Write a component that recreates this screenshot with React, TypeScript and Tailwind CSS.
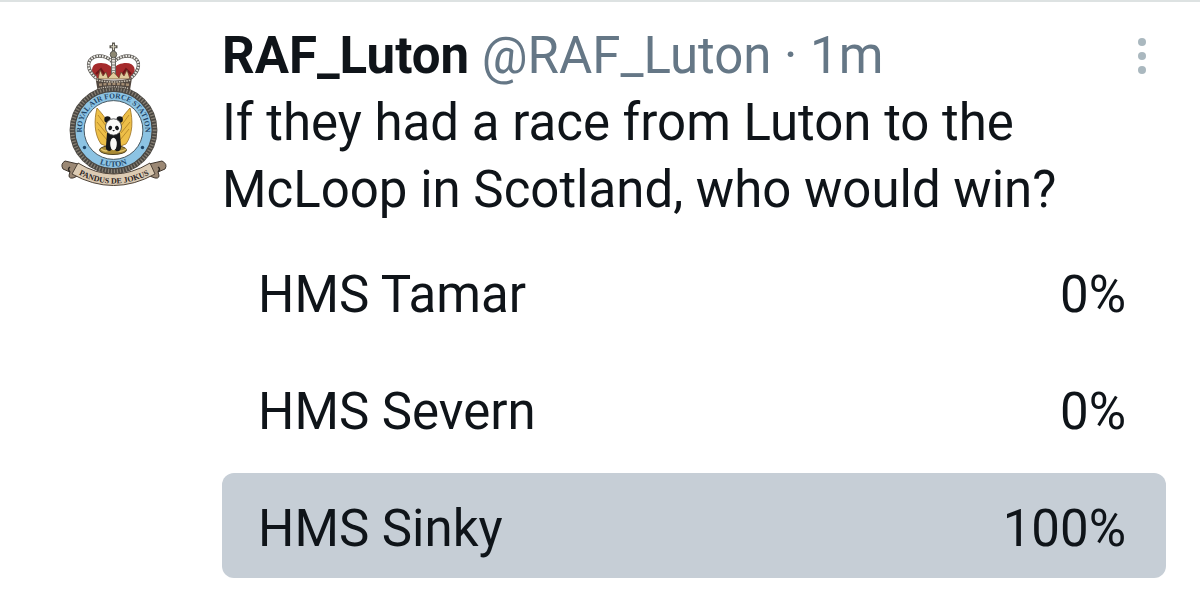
import { clsx } from 'clsx'

type PollOption = {
    label: string
    percent: number
}

const options: PollOption[] = [
    { label: 'HMS Tamar', percent: 0 },
    { label: 'HMS Severn', percent: 0 },
    { label: 'HMS Sinky', percent: 100 },
]

function StationBadge() {
    return (
        <svg viewBox="0 0 110 152" className="w-full" role="img" aria-label="RAF Luton station badge">
            <defs>
                <path id="ring-top" d="M23.7 102.8 A31.7 31.7 0 1 1 83.3 102.8" />
                <path id="ring-bottom" d="M19.5 106 A36.8 36.8 0 0 0 87.5 106" />
                <path id="motto" d="M14 134 Q53.5 157 94 134" />
            </defs>

            {/* Rope border and blue ring */}
            <circle cx="53.5" cy="92" r="40.7" fill="none" stroke="#4a4742" strokeWidth="6.4" />
            <circle cx="53.5" cy="92" r="41.2" fill="none" stroke="#857e72" strokeWidth="4" strokeDasharray="1.3 1.7" />
            <circle cx="53.5" cy="92" r="33.7" fill="#fff" stroke="#8cc3e3" strokeWidth="8.8" />
            <circle cx="53.5" cy="92" r="29.4" fill="none" stroke="#4c5961" strokeWidth="1" />
            <text fontSize="7.5" className="fill-[#1f4668] font-['Liberation_Serif',serif] font-bold">
                <textPath href="#ring-top" startOffset="50%" textAnchor="middle">ROYAL AIR FORCE STATION</textPath>
            </text>
            <text fontSize="8" className="fill-[#1f4668] font-['Liberation_Serif',serif] font-bold">
                <textPath href="#ring-bottom" startOffset="50%" textAnchor="middle">LUTON</textPath>
            </text>
            <circle cx="24.5" cy="109.5" r="1.7" fill="#1f4668" />
            <circle cx="82.5" cy="109.5" r="1.7" fill="#1f4668" />

            {/* Crown */}
            <path d="M34 40 C30 31 32 25 41 25 C47 25 51 28 53 31 C56 27 61 25 66 25 C75 25 77 32 72 40 Z" fill="#a52b2c" />
            <path d="M36 36 L41 31 L45 37 M62 37 L66 31 L71 36" stroke="#6e171a" strokeWidth="2" fill="none" />
            <path d="M36 40 C27 32 26 23 34 19 C42 16 50 20 53 25 C57 20 65 16 73 19 C81 23 80 32 71 40" fill="none" stroke="#625f5a" strokeWidth="3.4" />
            <path d="M36 40 C27 32 26 23 34 19 C42 16 50 20 53 25 C57 20 65 16 73 19 C81 23 80 32 71 40" fill="none" stroke="#efeeea" strokeWidth="2.1" strokeDasharray="1.6 1.2" />
            <path d="M53.5 19 V40" stroke="#6d6a65" strokeWidth="5" />
            <path d="M53.5 19 V40" stroke="#e9e8e3" strokeWidth="2.8" strokeDasharray="2 .8" />
            <circle cx="53.5" cy="16.5" r="3.3" fill="#8d8873" stroke="#4a4a46" strokeWidth=".8" />
            <path d="M53.5 4.5 V13 M49.5 8.8 H57.5" stroke="#5d5a52" strokeWidth="3" />
            <path d="M53.5 6 V12 M51 8.8 H56" stroke="#d9d4c2" strokeWidth="1" />
            <path d="M38 41 L40 32 L43 38 L46 34 L48 40 L53.5 34 L59 40 L61 34 L64 38 L67 32 L70 41 Z" fill="#e1cb9d" stroke="#5e4128" strokeWidth=".7" />
            <path d="M35.5 40 Q53.5 45 72 40 L70 52 Q53.5 48 37.5 52 Z" fill="#51473f" />
            <path d="M36.5 42 Q53.5 46 71 42" stroke="#c9c2b4" strokeWidth="1.5" strokeDasharray="1.5 1" fill="none" />
            <path d="M39 46.8 Q53.5 45 69 46.8" stroke="#a58e74" strokeWidth="2.4" strokeDasharray="3 1.5" fill="none" />
            <path d="M38.5 50.5 Q53.5 47 69 50.5" stroke="#c9c5bb" strokeWidth="1.2" strokeDasharray="1.2 1" fill="none" />

            {/* Wings behind the panda */}
            <path d="M37 70 C34 82 34 96 41 106 L49 109 L49 91 C48 82 43 77 37 70 Z" fill="#edbf48" stroke="#9b701f" strokeWidth=".8" />
            <path d="M70 70 C73 82 73 96 66 106 L58 109 L58 91 C59 82 64 77 70 70 Z" fill="#edbf48" stroke="#9b701f" strokeWidth=".8" />
            <path d="M38 77 L46 88 M37 84 L46 95 M38 91 L47 102 M69 77 L61 88 M70 84 L61 95 M69 91 L60 102" stroke="#b58727" strokeWidth=".9" />
            <ellipse cx="53" cy="112" rx="13.5" ry="4.5" fill="#a98a35" stroke="#504322" strokeWidth="1" />
            <path d="M41 111 Q46 115 50 111 M56 112 Q61 115 66 111" stroke="#e4c66c" strokeWidth="1.3" fill="none" />

            {/* Panda */}
            <path d="M47 95 H60 L61 109 Q61 114 56 113 L53.5 110 L50 113 Q45 113 46 108 Z" fill="#16181a" />
            <ellipse cx="53.5" cy="106" rx="3.3" ry="6.2" fill="#f8f8f5" />
            <circle cx="47.5" cy="81.5" r="3.2" fill="#16181a" />
            <circle cx="59.7" cy="81.5" r="3.2" fill="#16181a" />
            <ellipse cx="53.5" cy="89" rx="8" ry="8.2" fill="#fafaf8" stroke="#3b3e3e" strokeWidth=".8" />
            <ellipse cx="50.2" cy="90" rx="1.8" ry="2.3" fill="#16181a" transform="rotate(30 50.2 90)" />
            <ellipse cx="57" cy="90" rx="1.8" ry="2.3" fill="#16181a" transform="rotate(-30 57 90)" />
            <path d="M52.2 92 H55 L53.6 93.6 Z" fill="#16181a" />

            {/* Motto scroll */}
            <path d="M18 126 L5 123 Q0 126 3 131 L10 134 Q7 141 13 140 L20 137 Z" fill="#9b8874" stroke="#40372f" strokeWidth="1" />
            <path d="M89 126 L102 123 Q108 126 105 131 L98 134 Q101 141 95 140 L87 137 Z" fill="#9b8874" stroke="#40372f" strokeWidth="1" />
            <path d="M18 125 Q53.5 147 90 125 L95 136 Q53.5 159 12 136 Z" fill="#dccbb3" stroke="#4e4338" strokeWidth="1" />
            <path d="M10 134 Q7 131 10 129 M98 134 Q101 131 98 129" stroke="#2d2823" strokeWidth="1.5" fill="none" />
            <text fontSize="8" className="fill-[#29221d] font-['Liberation_Serif',serif] font-bold">
                <textPath href="#motto" startOffset="50%" textAnchor="middle">PANDUS DE JOKUS</textPath>
            </text>
        </svg>
    )
}

function PollRow({ label, percent }: PollOption) {
    return (
        <li
            className={clsx(
                'flex items-center justify-between rounded-xl pt-2 pr-10 pb-px pl-9',
                percent > 0 && 'bg-[#c6ced6]'
            )}
        >
            <span className="leading-[96px]">{label}</span>
            <span className="leading-[96px]">{percent}%</span>
        </li>
    )
}

export default function App() {
    return (
        <article className="flex min-h-screen border-t-2 border-[#dde2e2] bg-white pt-5 pr-[34px] pb-7 pl-[60px] font-[Roboto,sans-serif] text-[51px] leading-[67px] text-[#0f1419]">
            <div className="mt-4 w-[110px] shrink-0">
                <StationBadge />
            </div>

            <div className="ml-[52px] min-w-0 flex-1">
                <header className="flex items-start justify-between">
                    <div>
                        <a href="#profile">
                            <span className="font-bold">RAF_Luton</span>{' '}
                            <span className="text-[#657786]">@RAF_Luton</span>
                        </a>
                        <span className="text-[#657786]"> · 1m</span>
                    </div>
                    <button type="button" aria-label="More options" className="mt-4 mr-5 flex flex-col gap-[6px]">
                        <span className="size-2 rounded-full bg-[#aab8bf]" />
                        <span className="size-2 rounded-full bg-[#aab8bf]" />
                        <span className="size-2 rounded-full bg-[#aab8bf]" />
                    </button>
                </header>

                <p className="max-w-[860px]">If they had a race from Luton to the McLoop in Scotland, who would win?</p>

                <ul className="mt-4 flex flex-col gap-3">
                    {options.map((option) => (
                        <PollRow key={option.label} {...option} />
                    ))}
                </ul>
            </div>
        </article>
    )
}
